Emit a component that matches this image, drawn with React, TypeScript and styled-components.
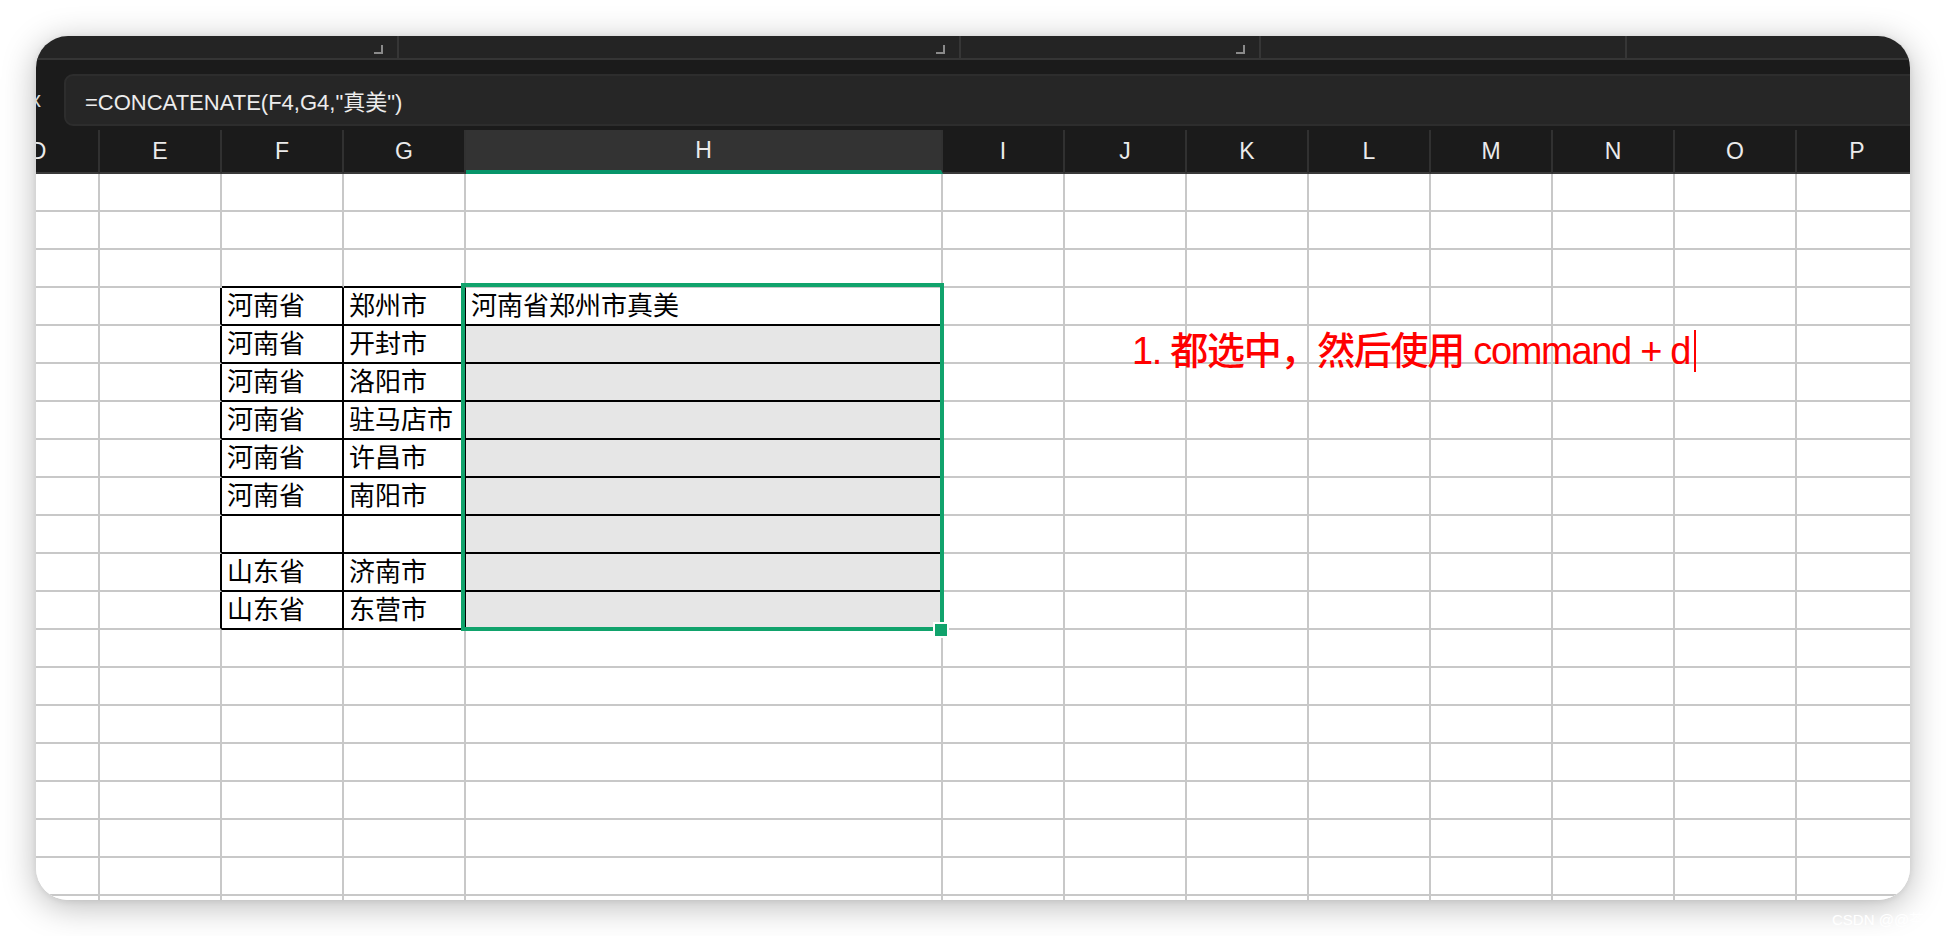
import styled, { createGlobalStyle } from 'styled-components'

const GlobalStyle = createGlobalStyle`
  html, body {
    margin: 0;
    padding: 0;
    background: #ffffff;
  }
  body {
    font-family: "Liberation Sans", "Noto Sans CJK SC", sans-serif;
  }
`

const GRID = '#c8c8c8'
const INK = '#000000'
const GREEN = '#11a36c'

const COLUMNS = ['D', 'E', 'F', 'G', 'H', 'I', 'J', 'K', 'L', 'M', 'N', 'O', 'P']
const ACTIVE_COL = 4
const ROW_COUNT = 20

const colTemplate = COLUMNS.map((_, i) => (i === ACTIVE_COL ? '477px' : '122px')).join(' ')

// row index -> [F, G, H]
const cellData: Record<number, string[]> = {
  3: ['河南省', '郑州市', '河南省郑州市真美'],
  4: ['河南省', '开封市', ''],
  5: ['河南省', '洛阳市', ''],
  6: ['河南省', '驻马店市', ''],
  7: ['河南省', '许昌市', ''],
  8: ['河南省', '南阳市', ''],
  9: ['', '', ''],
  10: ['山东省', '济南市', ''],
  11: ['山东省', '东营市', ''],
}

const inTable = (r: number, c: number) => r >= 3 && r <= 11 && (c === 2 || c === 3)
const inRange = (r: number, c: number) => r >= 3 && r <= 11 && c === ACTIVE_COL

const Page = styled.div`
  position: relative;
  width: 1946px;
  height: 936px;
  padding: 36px 0 0 36px;
  box-sizing: border-box;
  overflow: hidden;
`

const Window = styled.div`
  position: relative;
  width: 1874px;
  height: 864px;
  border-radius: 32px;
  overflow: hidden;
  background: #ffffff;
  box-shadow: 0 6px 34px rgba(0, 0, 0, 0.28), 0 1px 6px rgba(0, 0, 0, 0.08);
  display: flex;
  flex-direction: column;
`

const TopBar = styled.div`
  display: flex;
  height: 22px;
  background: #242424;
  border-bottom: 2px solid #353535;
  flex-shrink: 0;
`

const TopSegment = styled.div<{ $width?: number }>`
  position: relative;
  display: flex;
  justify-content: flex-end;
  align-items: flex-start;
  width: ${({ $width }) => ($width ? `${$width}px` : 'auto')};
  flex: ${({ $width }) => ($width ? '0 0 auto' : '1')};
  border-right: 2px solid #363636;
  box-sizing: border-box;
  padding: 9px 14px 0 0;
`

const CornerMark = styled.span`
  display: block;
  width: 7px;
  height: 7px;
  border-right: 2px solid #8a8a8a;
  border-bottom: 2px solid #8a8a8a;
`

const FormulaStrip = styled.div`
  display: flex;
  align-items: flex-start;
  height: 70px;
  padding-top: 14px;
  box-sizing: border-box;
  background: #1b1b1b;
  flex-shrink: 0;
`

const FxLabel = styled.span`
  width: 40px;
  margin-left: -12px;
  padding-right: 25px;
  box-sizing: border-box;
  text-align: right;
  flex-shrink: 0;
  line-height: 52px;
  font-size: 22px;
  color: #d8d8d8;
  font-family: "Liberation Sans", sans-serif;
  white-space: nowrap;
`

const FormulaBox = styled.div`
  flex: 1;
  height: 52px;
  margin-right: -20px;
  box-sizing: border-box;
  border: 2px solid #2d2d2d;
  border-radius: 9px;
  background: #262626;
  padding-left: 19px;
  display: flex;
  align-items: center;
  font-size: 22px;
  color: #ececec;
  font-family: "Liberation Sans", "Noto Sans CJK SC", sans-serif;
  white-space: nowrap;
`

const Sheet = styled.div`
  margin-left: -58px;
  display: flex;
  flex-direction: column;
`

const ColumnHeader = styled.div`
  display: grid;
  grid-template-columns: ${colTemplate};
  height: 44px;
  background: #1b1b1b;
`

const HeaderCell = styled.div<{ $active?: boolean }>`
  display: flex;
  align-items: center;
  justify-content: center;
  box-sizing: border-box;
  border-right: 2px solid #313131;
  border-bottom: ${({ $active }) => ($active ? `4px solid #07956a` : '2px solid #3a3a3a')};
  background: ${({ $active }) => ($active ? '#333333' : '#1b1b1b')};
  color: #ebebeb;
  font-size: 23px;
  font-family: "Liberation Sans", sans-serif;
`

const SheetBody = styled.div`
  position: relative;
  display: grid;
  grid-template-columns: ${colTemplate};
  grid-auto-rows: 38px;
`

const Cell = styled.div<{ $right: string; $bottom: string; $fill?: string }>`
  box-sizing: border-box;
  border-right: 2px solid ${({ $right }) => $right};
  border-bottom: 2px solid ${({ $bottom }) => $bottom};
  background: ${({ $fill }) => $fill ?? '#ffffff'};
  padding-left: 5px;
  font-size: 26px;
  line-height: 36px;
  color: #000000;
  white-space: nowrap;
  overflow: visible;
  font-family: "Liberation Sans", "Noto Sans CJK SC", sans-serif;
`

const Selection = styled.div`
  position: absolute;
  left: 483px;
  top: 109px;
  width: 483px;
  height: 348px;
  box-sizing: border-box;
  border: 4px solid ${GREEN};
  pointer-events: none;
`

const FillHandle = styled.div`
  position: absolute;
  left: 955px;
  top: 448px;
  width: 12px;
  height: 12px;
  background: ${GREEN};
  border: 2px solid #ffffff;
`

const Annotation = styled.div`
  position: absolute;
  left: 1154px;
  top: 156px;
  display: flex;
  align-items: flex-start;
  font-size: 38px;
  line-height: 42px;
  letter-spacing: -1.3px;
  color: #ff0000;
  font-weight: 500;
  white-space: nowrap;
  font-family: "Liberation Sans", "Noto Sans CJK SC", sans-serif;
`

const Caret = styled.span`
  display: inline-block;
  width: 2px;
  height: 42px;
  margin-left: 4px;
  background: #ff0000;
`

const Watermark = styled.div`
  position: absolute;
  left: 1832px;
  top: 908px;
  font-size: 15px;
  color: #ffffff;
  font-family: "Liberation Sans", "Noto Sans CJK SC", sans-serif;
`

const cellText = (r: number, c: number) => {
  const row = cellData[r]
  if (!row) return ''
  if (c === 2) return row[0]
  if (c === 3) return row[1]
  if (c === ACTIVE_COL) return row[2]
  return ''
}

export default function App() {
  const rows = Array.from({ length: ROW_COUNT }, (_, r) => r)

  return (
    <Page>
      <GlobalStyle />
      <Window>
        <TopBar>
          <TopSegment $width={363}>
            <CornerMark />
          </TopSegment>
          <TopSegment $width={562}>
            <CornerMark />
          </TopSegment>
          <TopSegment $width={300}>
            <CornerMark />
          </TopSegment>
          <TopSegment $width={366} />
          <TopSegment />
        </TopBar>
        <FormulaStrip>
          <FxLabel>fx</FxLabel>
          <FormulaBox>=CONCATENATE(F4,G4,"真美")</FormulaBox>
        </FormulaStrip>
        <Sheet>
          <ColumnHeader>
            {COLUMNS.map((col, i) => (
              <HeaderCell key={col} $active={i === ACTIVE_COL}>
                {col}
              </HeaderCell>
            ))}
          </ColumnHeader>
          <SheetBody>
            {rows.map((r) =>
              COLUMNS.map((col, c) => {
                const right = inTable(r, c) || inTable(r, c + 1) ? INK : GRID
                const bottom =
                  inTable(r, c) || inTable(r + 1, c) || inRange(r, c) ? INK : GRID
                const fill = inRange(r, c) && r > 3 ? '#e6e6e6' : undefined
                return (
                  <Cell key={`${col}${r}`} $right={right} $bottom={bottom} $fill={fill}>
                    {cellText(r, c)}
                  </Cell>
                )
              }),
            )}
            <Selection />
            <FillHandle />
            <Annotation>
              <span>1. 都选中，然后使用 command + d</span>
              <Caret />
            </Annotation>
          </SheetBody>
        </Sheet>
      </Window>
      <Watermark>CSDN @@茶</Watermark>
    </Page>
  )
}
